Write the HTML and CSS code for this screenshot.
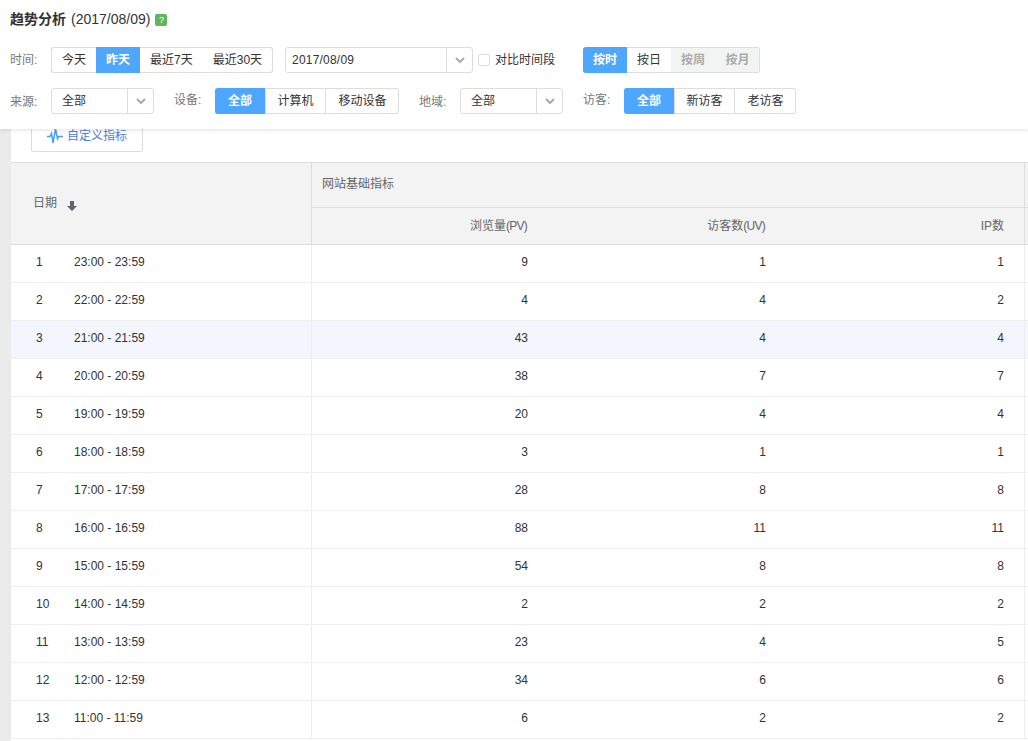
FILE: index.html
```html
<!DOCTYPE html>
<html lang="zh-CN">
<head>
<meta charset="utf-8">
<title>趋势分析</title>
<link rel="stylesheet" href="styles.css">
</head>
<body>
<header class="filters">
  <h1 class="title"><span class="title-main">趋势分析</span><span class="title-date">(2017/08/09)</span><span class="help">?</span></h1>
  <div class="filter-row">
    <span class="label">时间:</span>
    <div class="seg">
      <span class="seg-btn">今天</span><span class="seg-btn on">昨天</span><span class="seg-btn">最近7天</span><span class="seg-btn">最近30天</span>
    </div>
    <div class="select select-date"><span class="select-value">2017/08/09</span><span class="select-arrow"><svg viewBox="0 0 10 6" class="chev"><path d="M1 1l4 4 4-4"/></svg></span></div>
    <span class="check"></span>
    <span class="check-text">对比时间段</span>
    <div class="seg seg-gran">
      <span class="seg-btn on">按时</span><span class="seg-btn">按日</span><span class="seg-btn off">按周</span><span class="seg-btn off">按月</span>
    </div>
  </div>
  <div class="filter-row">
    <span class="label label-low">来源:</span>
    <div class="select"><span class="select-value">全部</span><span class="select-arrow"><svg viewBox="0 0 10 6" class="chev"><path d="M1 1l4 4 4-4"/></svg></span></div>
    <span class="label label-up gap">设备:</span>
    <div class="seg divided">
      <span class="seg-btn on w50">全部</span><span class="seg-btn w60">计算机</span><span class="seg-btn w74">移动设备</span>
    </div>
    <span class="label label-low gap">地域:</span>
    <div class="select"><span class="select-value">全部</span><span class="select-arrow"><svg viewBox="0 0 10 6" class="chev"><path d="M1 1l4 4 4-4"/></svg></span></div>
    <span class="label label-up gap">访客:</span>
    <div class="seg divided">
      <span class="seg-btn on w50">全部</span><span class="seg-btn w60">新访客</span><span class="seg-btn w62">老访客</span>
    </div>
  </div>
</header>
<main class="content">
  <div class="toolbar">
    <button class="metric-btn" type="button"><svg class="pulse" viewBox="0 0 16 16"><path d="M0 8.5h3l1.5-3 1.5 9.5 2.5-14 2 10 1.2-2.5h4.3"/></svg>自定义指标</button>
  </div>
  <table class="data">
    <colgroup><col class="c-date"><col class="c-a"><col class="c-b"><col class="c-c"><col class="c-more"></colgroup>
    <thead>
      <tr class="head-top">
        <th class="date-head" rowspan="2">日期<svg class="sort" viewBox="0 0 10 10"><path d="M3 0h4v5h3l-5 5-5-5h3z"/></svg></th>
        <th class="group-head" colspan="3">网站基础指标</th>
        <th></th>
      </tr>
      <tr class="head-sub">
        <th>浏览量<span class="unit">(PV)</span></th>
        <th>访客数<span class="unit">(UV)</span></th>
        <th class="edge">IP数</th>
        <th></th>
      </tr>
    </thead>
    <tbody>
      <tr><td class="date"><span class="idx">1</span>23:00 - 23:59</td><td>9</td><td>1</td><td class="edge">1</td><td></td></tr>
      <tr><td class="date"><span class="idx">2</span>22:00 - 22:59</td><td>4</td><td>4</td><td class="edge">2</td><td></td></tr>
      <tr class="hover"><td class="date"><span class="idx">3</span>21:00 - 21:59</td><td>43</td><td>4</td><td class="edge">4</td><td></td></tr>
      <tr><td class="date"><span class="idx">4</span>20:00 - 20:59</td><td>38</td><td>7</td><td class="edge">7</td><td></td></tr>
      <tr><td class="date"><span class="idx">5</span>19:00 - 19:59</td><td>20</td><td>4</td><td class="edge">4</td><td></td></tr>
      <tr><td class="date"><span class="idx">6</span>18:00 - 18:59</td><td>3</td><td>1</td><td class="edge">1</td><td></td></tr>
      <tr><td class="date"><span class="idx">7</span>17:00 - 17:59</td><td>28</td><td>8</td><td class="edge">8</td><td></td></tr>
      <tr><td class="date"><span class="idx">8</span>16:00 - 16:59</td><td>88</td><td>11</td><td class="edge">11</td><td></td></tr>
      <tr><td class="date"><span class="idx">9</span>15:00 - 15:59</td><td>54</td><td>8</td><td class="edge">8</td><td></td></tr>
      <tr><td class="date"><span class="idx">10</span>14:00 - 14:59</td><td>2</td><td>2</td><td class="edge">2</td><td></td></tr>
      <tr><td class="date"><span class="idx">11</span>13:00 - 13:59</td><td>23</td><td>4</td><td class="edge">5</td><td></td></tr>
      <tr><td class="date"><span class="idx">12</span>12:00 - 12:59</td><td>34</td><td>6</td><td class="edge">6</td><td></td></tr>
      <tr><td class="date"><span class="idx">13</span>11:00 - 11:59</td><td>6</td><td>2</td><td class="edge">2</td><td></td></tr>
    </tbody>
  </table>
</main>
</body>
</html>
```
FILE: styles.css
```css
* { box-sizing: border-box; }
html, body { height: 100%; }
body {
  margin: 0;
  background: #ebebeb;
  color: #333;
  font: 12px/1.4 "Liberation Sans", "Noto Sans CJK SC", sans-serif;
  overflow: hidden;
}
.filters {
  position: absolute;
  top: 0;
  left: 0;
  right: 0;
  height: 129px;
  padding: 10px 0 0 10px;
  background: #fff;
  box-shadow: 0 1px 4px rgba(0, 0, 0, .12);
  z-index: 2;
}
.title {
  display: flex;
  align-items: center;
  height: 20px;
  margin: 0 0 17px;
  font-size: 14px;
  font-weight: 400;
  color: #333;
}
.title-main { font-weight: 700; }
.title-date { margin-left: 5px; }
.help {
  width: 12px;
  height: 12px;
  margin-left: 5px;
  border-radius: 2px;
  background: #5cb85c;
  color: #fff;
  font-size: 9px;
  line-height: 12px;
  text-align: center;
}
.filter-row {
  display: flex;
  align-items: center;
  height: 26px;
  margin-bottom: 15px;
}
.label {
  flex: 0 0 41px;
  color: #777;
}
.label-up { margin-top: -2px; }
.label-low { margin-top: 2px; }
.gap { margin-left: 20px; }
.seg {
  display: flex;
  height: 26px;
  border-radius: 3px;
  box-shadow: inset 0 0 0 1px #ddd;
  overflow: hidden;
}
.seg-btn {
  padding: 0 10px;
  line-height: 26px;
  white-space: nowrap;
  color: #333;
}
.seg-btn:first-child { padding-left: 11px; }
.seg-btn:last-child { padding-right: 11px; }
.seg-btn.on { background: #4da6ff; color: #fff; font-weight: 700; }
.seg-btn.off { background: #f2f3f3; color: #aaa; font-weight: 700; box-shadow: inset 0 1px 0 #ddd, inset 0 -1px 0 #ddd; }
.seg-btn.off:last-child { box-shadow: inset 0 1px 0 #ddd, inset 0 -1px 0 #ddd, inset -1px 0 0 #ddd; }
.divided .seg-btn { padding: 0; text-align: center; }
.divided .seg-btn + .seg-btn { border-left: 1px solid #ddd; }
.w50 { width: 50px; }
.w60 { width: 60px; }
.w62 { width: 62px; }
.w74 { width: 74px; }
.seg-gran { margin-left: 28px; }
.seg-gran .seg-btn { width: 44px; padding: 0; text-align: center; }
.seg-gran .seg-btn:last-child { width: 45px; }
.select {
  display: flex;
  flex: 0 0 103px;
  height: 26px;
  border: 1px solid #ddd;
  border-radius: 3px;
  line-height: 24px;
}
.select-date { flex-basis: 188px; margin-left: 12px; }
.select-value { flex: 1; padding-left: 10px; }
.select-date .select-value { padding-left: 6px; letter-spacing: .2px; }
.select-arrow {
  display: flex;
  align-items: center;
  justify-content: center;
  flex: 0 0 26px;
  border-left: 1px solid #ddd;
}
.chev {
  width: 10px;
  height: 6px;
  fill: none;
  stroke: #aaa;
  stroke-width: 2;
}
.check {
  width: 12px;
  height: 12px;
  margin: 0 5px 0 5px;
  border: 1px solid #ddd;
  border-radius: 2px;
}
.check-text { color: #333; }
.content {
  margin-left: 11px;
  height: 100%;
  padding-top: 120px;
  background: #fff;
  overflow: hidden;
}
.toolbar {
  height: 32px;
  margin: 0 0 10px 20px;
}
.metric-btn {
  display: flex;
  align-items: center;
  justify-content: center;
  width: 112px;
  height: 32px;
  padding: 0;
  border: 1px solid #ddd;
  border-radius: 2px;
  background: #fff;
  color: #4a7de0;
  font: inherit;
}
.pulse {
  width: 16px;
  height: 16px;
  margin-right: 4px;
  fill: none;
  stroke: #4a9ff5;
  stroke-width: 1.5;
}
.data {
  width: 1114px;
  table-layout: fixed;
  border-collapse: separate;
  border-spacing: 0;
}
.c-date { width: 301px; }
.c-a { width: 236px; }
.c-b { width: 238px; }
.c-c { width: 239px; }
.c-more { width: 100px; }
.data th {
  padding: 0 20px 0 0;
  background: #f3f3f3;
  color: #666;
  font-weight: 400;
  text-align: right;
  border-bottom: 1px solid #ddd;
}
.head-top th { height: 46px; border-top: 1px solid #ddd; }
.head-sub th { height: 37px; }
.unit { letter-spacing: -.75px; margin-right: 1px; }
.data th.date-head {
  padding: 0 0 0 22px;
  text-align: left;
  border-right: 1px solid #ddd;
}
.data th.group-head { padding: 0 0 2px 10px; text-align: left; }
.data th.edge { border-right: 1px solid #ddd; }
.head-top th:nth-child(2) { border-right: 1px solid #ddd; }
.sort {
  width: 10px;
  height: 10px;
  margin-left: 10px;
  vertical-align: -4px;
  fill: #5a6570;
}
.data td {
  height: 38px;
  padding: 0 20px 2px 0;
  text-align: right;
  border-bottom: 1px solid #eee;
}
.data td.date {
  padding: 0 0 2px 25px;
  text-align: left;
  border-right: 1px solid #eee;
}
.data td.edge { border-right: 1px solid #eee; }
.idx { display: inline-block; width: 38px; }
.hover td { background: #f3f6fc; }
```
